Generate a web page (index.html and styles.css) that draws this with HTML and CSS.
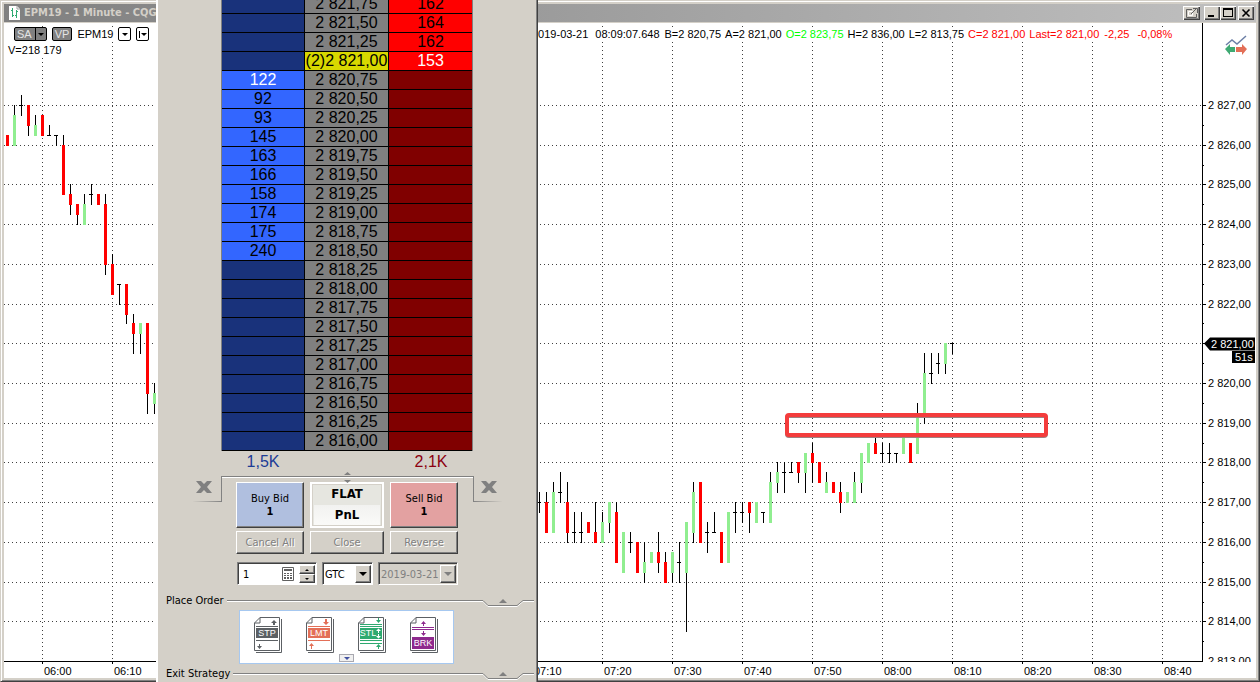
FILE: index.html
```html
<!DOCTYPE html>
<html lang="en">
<head>
    <meta charset="UTF-8">
    <meta name="viewport" content="width=device-width, initial-scale=1.0">
    <title>EPM19 - 1 Minute - CQG</title>
    <link rel="stylesheet" href="styles.css">
</head>
<body>
    <div class="window">
        <div class="titlebar">
            <svg class="title-icon" width="12" height="15" viewBox="0 0 12 15">
                <path d="M0 0h8l3 3v11H0z" fill="#fff"/>
                <path d="M8 0v3h3" fill="none" stroke="#a0a0a0"/>
                <path d="M3.500 2v9M2 4.500h2M3 9.500h2M7.500 4v8M6 9.500h2M7 5.500h2" fill="none" stroke="#2eaa70"/>
            </svg>
            <h1>EPM19 - 1 Minute - CQG</h1>
            <div class="window-buttons">
                <button class="win-btn popout" aria-label="Pop out">
                    <svg width="14" height="12" viewBox="0 0 14 12" fill="none" stroke="#606060">
                        <path d="M7 2.500H1.500v8h10V7"/>
                        <path d="M3.500 4.500h4v4h-4z" stroke="#fff"/>
                        <path d="M6 7l5-5M8 1.500h4.500V6"/>
                    </svg>
                </button>
                <button class="win-btn" aria-label="Minimize">
                    <svg width="12" height="10" viewBox="0 0 12 10"><path d="M2 7h6v2H2z"/></svg>
                </button>
                <button class="win-btn" aria-label="Maximize">
                    <svg width="12" height="10" viewBox="0 0 12 10"><path d="M1 0h10v9H1zM2 2v6h8V2z" fill-rule="evenodd"/></svg>
                </button>
                <button class="win-btn close" aria-label="Close window">
                    <svg width="12" height="10" viewBox="0 0 12 10"><path d="M2.500 1.500l7 7M9.500 1.500l-7 7" stroke="#000" stroke-width="1.600"/></svg>
                </button>
            </div>
        </div>

        <div class="chart" id="chart">
            <svg class="plot" id="plot"></svg>

            <div class="chart-header">
                <div class="chart-tools">
                    <button class="tag">SA<span class="tag-arrow"></span></button>
                    <button class="tag">VP</button>
                    <span class="symbol">EPM19</span>
                    <button class="mini" aria-label="Symbol menu"><i class="caret"></i></button>
                    <button class="mini" aria-label="Interval menu"><i class="bar"></i><i class="caret"></i></button>
                </div>
                <div class="quotes">
                    <span>2019-03-21</span>
                    <span class="time">08:09:07.648</span>
                    <span>B=2 820,75</span>
                    <span>A=2 821,00</span>
                    <span class="up">O=2 823,75</span>
                    <span>H=2 836,00</span>
                    <span>L=2 813,75</span>
                    <span class="down">C=2 821,00</span>
                    <span class="down">Last=2 821,00</span>
                    <span class="down change">-2,25</span>
                    <span class="down">-0,08%</span>
                </div>
            </div>
            <p class="volume">V=218 179</p>

            <button class="trade-btn" aria-label="Trade from chart">
                <svg width="22" height="20" viewBox="0 0 22 20">
                    <path d="M1 10l6-5 5 4 9-8" fill="none" stroke="#6c7fa6" stroke-width="1.500"/>
                    <path d="M0 14l5-5v3h5v5H5v3z" fill="#3faa73"/>
                    <path d="M22 14l-5-5v3h-6v5h6v3z" fill="#e36f57"/>
                </svg>
            </button>
        </div>
    </div>

    <div class="panel">
        <table class="ladder">
            <tbody id="ladder-rows">
                <!-- Price rows are added here -->
            </tbody>
        </table>
        <div class="totals">
            <span class="total-bid">1,5K</span>
            <span class="total-ask">2,1K</span>
        </div>

        <div class="entry">
            <div class="tab tab-left">
                <button class="cancel-x" aria-label="Cancel buys">
                    <svg width="16" height="12" viewBox="0 0 16 12"><path d="M0 0h5l3 3 3-3h5l-5 6 5 6h-5L8 9l-3 3H0l5-6z"/></svg>
                </button>
            </div>
            <div class="entry-body">
                <svg class="splitter" width="7" height="12" viewBox="0 0 7 12"><path d="M3.500 0L7 3H0zM3.500 11L7 8H0z"/></svg>
                <div class="order-buttons">
                    <button class="btn buy">Buy Bid<b>1</b></button>
                    <div class="position">
                        <b>FLAT</b>
                        <b class="pnl">PnL</b>
                    </div>
                    <button class="btn sell">Sell Bid<b>1</b></button>
                    <button class="btn" disabled>Cancel All</button>
                    <button class="btn" disabled>Close</button>
                    <button class="btn" disabled>Reverse</button>
                </div>
                <div class="order-fields">
                    <div class="field qty">
                        <input type="text" value="1" aria-label="Quantity">
                        <button class="calc" aria-label="Calculator">
                            <svg width="12" height="14" viewBox="0 0 12 14">
                                <path d="M.5.5h11v13H.5z" fill="#fff" stroke="#606060"/>
                                <path d="M2 2h8v2H2zM2 6h2v1H2zM5 6h2v1H5zM8 6h2v1H8zM2 8h2v1H2zM5 8h2v1H5zM8 8h2v1H8zM2 10h2v2H2zM5 10h2v2H5zM8 10h2v2H8z" fill="#606060"/>
                            </svg>
                        </button>
                        <div class="spin">
                            <button class="btn" aria-label="Increase"><svg width="4" height="2" viewBox="0 0 4 2"><path d="M2 0l2 2H0z"/></svg></button>
                            <button class="btn" aria-label="Decrease"><svg width="4" height="2" viewBox="0 0 4 2"><path d="M0 0h4L2 2z"/></svg></button>
                        </div>
                    </div>
                    <div class="field tif">
                        <select aria-label="Duration"><option>GTC</option></select>
                        <span class="drop"><i class="caret"></i></span>
                    </div>
                    <div class="field date">
                        <select aria-label="Expiry date" disabled><option>2019-03-21</option></select>
                        <span class="drop"><i class="caret"></i></span>
                    </div>
                </div>
            </div>
            <div class="tab tab-right">
                <button class="cancel-x" aria-label="Cancel sells">
                    <svg width="16" height="12" viewBox="0 0 16 12"><path d="M0 0h5l3 3 3-3h5l-5 6 5 6h-5L8 9l-3 3H0l5-6z"/></svg>
                </button>
            </div>
        </div>

        <div class="section">
            <h2>Place Order</h2>
            <span class="rule"></span>
            <svg class="notch" width="52" height="10" viewBox="0 0 52 10">
                <path d="M0 3.500h1l5 5h29l6-5h11" fill="none" stroke="#fff"/>
                <path d="M0 2.500h1l5 5h29l6-5h11" fill="none" stroke="#808080"/>
                <path d="M21 1l4 4h-8z" fill="#808080"/>
            </svg>
        </div>
        <div class="order-types">
            <button class="doc" aria-label="Stop order">
                <svg width="28" height="36" viewBox="0 0 28 36">
                    <path d="M27.500 2v33.500H2" fill="none" stroke="#5c6064"/>
                    <path d="M6 .5h19.500v33H.5V6zM6 .5V6H.5" fill="#fff" stroke="#5c6064"/>
                    <path d="M2 11h22v10H2zM2 9h22v1H2zM2 23h22v1H2zM20 3l3 3h-2v2h-2V6h-2zM5 27h1v2h2l-2.500 3L3 29h2z" fill="#5c6064"/>
                    <text x="13" y="19">STP</text>
                </svg>
            </button>
            <button class="doc" aria-label="Limit order">
                <svg width="28" height="36" viewBox="0 0 28 36">
                    <path d="M27.500 2v33.500H2" fill="none" stroke="#5c6064"/>
                    <path d="M6 .5h19.500v33H.5V6zM6 .5V6H.5" fill="#fff" stroke="#5c6064"/>
                    <path d="M2 11h22v10H2zM2 9h22v1H2zM2 23h22v1H2zM19 2h2v3h2l-3 3-3-3h2zM5 32v-3H3l2.500-3L8 29H6v3z" fill="#e36f57"/>
                    <text x="13" y="19">LMT</text>
                </svg>
            </button>
            <button class="doc" aria-label="Stop limit order">
                <svg width="28" height="36" viewBox="0 0 28 36">
                    <path d="M27.500 2v33.500H2" fill="none" stroke="#5c6064"/>
                    <path d="M6 .5h19.500v33H.5V6zM6 .5V6H.5" fill="#fff" stroke="#5c6064"/>
                    <path d="M2 11h22v11H2zM2 7h22v1H2zM2 9h22v1H2zM2 23h22v1H2zM2 26h22v1H2zM20 1h1v2h2l-2.500 3L18 3h2zM20 32v-2h-2l2.500-3 2.500 3h-2v2z" fill="#2eaa70"/>
                    <path d="M20 16v-2h-2l2.500-2.500L23 14h-2v2zM20 17h1v2h2l-2.500 2.500L18 19h2z" fill="#fff"/>
                    <text x="10" y="19">STL</text>
                </svg>
            </button>
            <button class="doc" aria-label="Bracket order">
                <svg width="28" height="36" viewBox="0 0 28 36">
                    <path d="M27.500 2v33.500H2" fill="none" stroke="#5c6064"/>
                    <path d="M6 .5h19.500v33H.5V6zM6 .5V6H.5" fill="#fff" stroke="#5c6064"/>
                    <path d="M2 20h22v12H2zM2 10h22v1H2zM2 12h22v1H2zM13 9V7h-2l2.500-3L16 7h-2v2zM13 14h1v2h2l-2.500 3-2.500-3h2z" fill="#8e2a8e"/>
                    <text x="13" y="29">BRK</text>
                </svg>
            </button>
            <button class="more" aria-label="More order types"><i class="caret"></i></button>
        </div>
        <div class="section">
            <h2>Exit Strategy</h2>
            <span class="rule"></span>
            <svg class="notch" width="52" height="10" viewBox="0 0 52 10">
                <path d="M0 3.500h1l5 5h29l6-5h11" fill="none" stroke="#fff"/>
                <path d="M0 2.500h1l5 5h29l6-5h11" fill="none" stroke="#808080"/>
                <path d="M21 1l4 4h-8z" fill="#808080"/>
            </svg>
        </div>
    </div>

    <script src="script.js"></script>
</body>
</html>
```

FILE: styles.css
```css
* {
    margin: 0;
    padding: 0;
    box-sizing: border-box;
}

body {
    height: 100vh;
    overflow: hidden;
    position: relative;
    background-color: #d4d0c8;
    font-family: "DejaVu Sans Condensed", "DejaVu Sans", sans-serif;
    font-size: 11px;
    color: #000;
}

button, input, select {
    font: inherit;
    color: inherit;
    border: none;
    background: none;
    border-radius: 0;
}

/* Chart window */

.window {
    height: 100%;
    display: flex;
    flex-direction: column;
    padding: 3px 2px 2px 3px;
    border: 1px solid #d4d0c8;
    border-right-color: #404040;
    border-bottom-color: #404040;
    box-shadow: inset 1px 1px #fff, inset -1px -1px #808080;
}

.titlebar {
    display: flex;
    align-items: center;
    height: 18px;
    margin-right: 1px;
    padding: 0 2px 0 5px;
    background: linear-gradient(to right, #808080, #c0c0c0);
}

.titlebar h1 {
    flex: 1;
    margin-left: 3px;
    font-size: 11px;
    line-height: 18px;
    color: #d4d0c8;
}

.window-buttons {
    display: flex;
}

.win-btn {
    width: 16px;
    height: 14px;
    display: flex;
    align-items: center;
    justify-content: center;
    background-color: #d4d0c8;
    box-shadow: inset 1px 1px #fff, inset -1px -1px #404040, inset -2px -2px #808080;
}

.win-btn.popout {
    margin-right: 4px;
    width: 17px;
}

.win-btn.close {
    margin-left: 2px;
}

.chart {
    flex: 1;
    min-height: 0;
    margin: 1px 1px 1px 0;
    position: relative;
    background-color: #fff;
    font-family: "Liberation Sans", Arial, sans-serif;
}

.plot {
    position: absolute;
    top: 0;
    left: 0;
    width: 100%;
    height: 100%;
    font-size: 11px;
}

.chart-header {
    position: relative;
    display: flex;
    align-items: center;
    padding-top: 4px;
    height: 18px;
}

.chart-tools {
    display: flex;
    align-items: center;
    gap: 5px;
    width: 528px;
    padding-left: 10px;
}

.tag {
    display: flex;
    height: 14px;
    line-height: 12px;
    padding: 0 2px;
    border: 1px solid #000;
    border-radius: 2px;
    background-color: #808080;
    color: #e4e4e4;
}

.tag-arrow {
    width: 11px;
    margin: 0 -2px 0 3px;
    border-left: 1px solid #000;
    position: relative;
}

.tag-arrow::after {
    content: "";
    position: absolute;
    top: 5px;
    left: 2px;
    border: 3px solid transparent;
    border-top-color: #000;
    border-bottom: none;
}

.symbol {
    background-color: #fff;
}

.mini {
    display: flex;
    align-items: center;
    justify-content: center;
    gap: 1px;
    width: 13px;
    height: 14px;
    border: 1px solid #000;
    border-radius: 2px;
    background-color: #fff;
}

.bar {
    width: 1px;
    height: 7px;
    background-color: #000;
}

.caret {
    border: 3px solid transparent;
    border-top-color: #000;
    border-bottom: none;
}

.quotes {
    display: flex;
    gap: 4px;
    background-color: #fff;
    white-space: nowrap;
    line-height: 14px;
}

.quotes .time {
    margin: 0 1px 0 3px;
}

.quotes .up {
    color: #00ff00;
}

.quotes .down {
    color: #ff0000;
}

.quotes .change {
    margin: 0 4px 0 1px;
}

.volume {
    position: relative;
    width: max-content;
    margin-left: 4px;
    padding-top: 2px;
    line-height: 14px;
    background-color: #fff;
}

.trade-btn {
    position: absolute;
    top: 12px;
    right: 9px;
    line-height: 0;
}

.grid {
    stroke: #404040;
    stroke-dasharray: 1 3;
}

.label-light {
    fill: #fff;
}

.bull {
    fill: #90ee90;
}

.bear {
    fill: #ff0000;
}

.marker {
    fill: none;
    stroke: #f43c3c;
    stroke-width: 4;
}

.marker-shadow {
    fill: none;
    stroke: #a08080;
    stroke-width: 4;
}

/* Order panel */

.panel {
    position: absolute;
    top: 0;
    bottom: 0;
    left: 156px;
    width: 382px;
    overflow: hidden;
    background-color: #d4d0c8;
    border-right: 1px solid #404040;
    box-shadow: inset 2px 0 #fff, inset -1px 0 #808080;
}

.ladder {
    width: 252px;
    margin: -5px 0 0 65px;
    border-collapse: separate;
    border-spacing: 0;
    border-left: 1px solid #808080;
    border-right: 1px solid #808080;
    table-layout: fixed;
    font-family: "Liberation Sans", Arial, sans-serif;
    font-size: 16px;
}

.ladder td {
    height: 19px;
    line-height: 18px;
    text-align: center;
    white-space: nowrap;
    border-bottom: 1px solid #000;
}

.ladder .bid {
    width: 82px;
    background-color: #19327b;
}

.ladder .bid.filled {
    background-color: #3366ff;
}

.ladder .price {
    width: 85px;
    background-color: #808080;
    border-left: 1px solid #000;
    border-right: 1px solid #000;
}

.ladder .ask {
    background-color: #800000;
}

.ladder .ask.filled {
    background-color: #ff0000;
}

.ladder .last {
    background-color: #d8d800;
}

.ladder .best {
    color: #fff;
}

.totals {
    display: flex;
    justify-content: space-between;
    width: 252px;
    height: 25px;
    margin-left: 65px;
    font-family: "Liberation Sans", Arial, sans-serif;
    font-size: 16px;
    line-height: 21px;
}

.totals span {
    width: 84px;
    text-align: center;
}

.total-bid {
    color: #1c3c96;
}

.total-ask {
    color: #8c0010;
}

.entry {
    display: flex;
    height: 118px;
}

.tab {
    height: 26px;
    display: flex;
    align-items: center;
    border-bottom: 1px solid;
}

.tab-left {
    width: 29px;
    margin-left: 37px;
    padding-left: 3px;
    border-right: 1px solid #808080;
    border-image: linear-gradient(to right, #d4d0c8, #808080) 1;
}

.tab-right {
    width: 29px;
    padding-left: 7px;
    border-left: 1px solid #808080;
    border-image: linear-gradient(to left, #d4d0c8, #808080) 1;
}

.cancel-x {
    line-height: 0;
    padding-bottom: 4px;
    fill: #808080;
}

.entry-body {
    position: relative;
    width: 251px;
    padding: 5px 14px 0;
    border-top: 1px solid #808080;
    box-shadow: inset 0 1px #fff;
}

.splitter {
    position: absolute;
    top: -5px;
    left: 122px;
    fill: #808080;
}

.order-buttons {
    display: grid;
    grid-template-columns: 68px 74px 68px;
    grid-template-rows: 46px 23px;
    gap: 3px 6px;
}

.btn {
    background-color: #d4d0c8;
    border: 1px solid #fff;
    border-right-color: #404040;
    border-bottom-color: #404040;
    box-shadow: inset -1px -1px #808080;
}

.btn:disabled {
    color: #808080;
    text-shadow: 1px 1px #fff;
}

.btn b {
    display: block;
}

.buy {
    background-color: #b0bfdf;
}

.sell {
    background-color: #e3a1a1;
}

.position {
    border: 2px solid #fff;
    background-color: #e6e6e0;
    box-shadow: inset 1px 1px #d4d0c8, inset -1px -1px #d4d0c8;
    font-size: 13px;
    text-align: center;
}

.position b {
    display: block;
    height: 20px;
    line-height: 19px;
}

.position .pnl {
    margin: 1px 2px 0;
    background: linear-gradient(to bottom, #f2f2f0, #fafaf8);
}

.order-fields {
    display: flex;
    gap: 5px;
    padding: 8px 0 0 1px;
}

.field {
    position: relative;
    display: flex;
    height: 23px;
    border: 1px solid #808080;
    border-right-color: #fff;
    border-bottom-color: #fff;
    box-shadow: inset 1px 1px #404040;
    padding: 2px 1px 1px 2px;
    background-color: #fff;
}

.qty {
    width: 80px;
}

.qty input {
    flex: 1;
    min-width: 0;
    padding-left: 3px;
    outline: none;
}

.calc {
    padding: 0 5px;
    line-height: 0;
}

.spin {
    width: 16px;
    display: flex;
    flex-direction: column;
}

.spin .btn {
    flex: 1;
    line-height: 0;
    display: flex;
    align-items: center;
    justify-content: center;
}

.field select {
    appearance: none;
    width: 100%;
    outline: none;
}

.tif {
    width: 51px;
}

.date {
    width: 80px;
    background-color: #d4d0c8;
}

.date select:disabled {
    color: #808080;
    opacity: 1;
}

.date .caret {
    border-top-color: #808080;
}

.drop {
    position: absolute;
    top: 2px;
    right: 1px;
    bottom: 1px;
    width: 16px;
    display: flex;
    align-items: center;
    justify-content: center;
    pointer-events: none;
    background-color: #d4d0c8;
    border: 1px solid #fff;
    border-right-color: #404040;
    border-bottom-color: #404040;
    box-shadow: inset -1px -1px #808080;
}

.drop .caret {
    border-width: 4px 4px 0;
}

.section {
    display: flex;
    align-items: center;
    height: 14px;
    padding: 0 3px 0 10px;
}

.section h2 {
    margin-right: 3px;
    font-size: 11px;
    font-weight: normal;
    line-height: 14px;
}

.rule {
    flex: 1;
    height: 2px;
    border-top: 1px solid #808080;
    border-bottom: 1px solid #fff;
}

.notch {
    height: 10px;
    margin-top: 4px;
}

.order-types {
    position: relative;
    display: flex;
    gap: 24px;
    width: 215px;
    height: 54px;
    margin: 2px 0 3px 83px;
    padding: 6px 14px;
    background-color: #fff;
    border: 1px solid #a6c8f0;
}

.doc {
    line-height: 0;
    height: 36px;
}

.doc text {
    font-family: "Liberation Sans", Arial, sans-serif;
    font-size: 9px;
    text-anchor: middle;
    fill: #fff;
}

.more {
    position: absolute;
    left: 99px;
    bottom: 1px;
    width: 15px;
    height: 8px;
    display: flex;
    align-items: center;
    justify-content: center;
    border: 1px solid #a8a8b0;
    background-color: #f0f0f0;
}

.more .caret {
    border-top-color: #4050a0;
}
```

FILE: script.js
```js
const SVG_NS = "http://www.w3.org/2000/svg";
const chart = document.getElementById("chart");
const plot = document.getElementById("plot");

const TOP_PRICE = 2827;
const TOP_Y = 82;
const TICK = 9.93; // height of a 0,25 move
const MINUTE = 7;
const FIRST_X = 38; // 06:00

// [open, high, low, close] in ticks below TOP_PRICE
const series = [
    {
        start: -5,
        bars: [
            [3, 3, 4, 4], [4, 0, 4, 1], [0, -1, 1, 0], [0, 0, 3, 2], [3, 1, 3, 2],
            [1, 1, 3, 3], [3, 2, 3, 3], [3, 3, 4, 3], [4, 3, 9, 9], [9, 8, 11, 10],
            [10, 10, 12, 11], [12, 9, 12, 10], [9, 8, 10, 9], [9, 9, 10, 10], [10, 9, 17, 16],
            [16, 15, 19, 19], [18, 18, 20, 18], [18, 18, 22, 21], [22, 21, 25, 23], [23, 22, 25, 22],
            [22, 22, 31, 29], [30, 28, 31, 29]
        ]
    },
    {
        start: 71,
        bars: [
            [40, 39, 41, 40], [40, 39, 43, 43], [43, 38, 43, 39], [39, 37, 40, 39], [40, 38, 44, 43],
            [43, 41, 44, 43], [43, 41, 44, 43], [42, 42, 43, 43], [43, 40, 44, 44], [44, 41, 44, 42],
            [42, 40, 43, 40], [41, 40, 46, 46], [47, 43, 47, 43], [44, 43, 45, 44], [44, 44, 47, 47],
            [47, 44, 48, 46], [46, 45, 46, 45], [45, 43, 47, 46], [46, 45, 48, 48], [47, 45, 48, 45],
            [46, 44, 48, 46], [47, 42, 53, 42], [43, 38, 44, 39], [38, 38, 44, 44], [43, 42, 45, 43],
            [43, 41, 43, 43], [43, 43, 46, 46], [46, 41, 46, 41], [41, 40, 43, 41], [41, 40, 42, 41],
            [40, 40, 43, 41], [42, 40, 42, 40], [41, 41, 42, 41], [42, 37, 42, 38], [38, 36, 39, 37],
            [37, 36, 39, 37], [37, 36, 37, 37], [36, 36, 38, 37], [37, 35, 39, 35], [35, 34, 38, 36],
            [36, 36, 38, 38], [39, 37, 39, 38], [38, 38, 39, 39], [39, 38, 41, 40], [40, 39, 40, 39],
            [40, 37, 40, 38], [38, 35, 39, 35], [36, 34, 36, 34], [34, 33, 35, 35], [35, 34, 36, 35],
            [35, 34, 36, 35], [35, 35, 36, 35], [35, 33, 35, 33], [34, 34, 36, 36], [35, 30, 35, 31],
            [31, 25, 32, 27], [27, 25, 28, 27], [26, 25, 27, 26], [26, 24, 27, 24], [24, 24, 25, 24]
        ]
    }
];

const tickY = ticks => Math.round(TOP_Y + ticks * TICK);

function formatPrice(price) {
    const text = price.toFixed(2).replace(".", ",");
    return text[0] + " " + text.slice(1);
}

function add(name, attrs, text) {
    const el = document.createElementNS(SVG_NS, name);
    for (const key in attrs) {
        el.setAttribute(key, attrs[key]);
    }
    if (text) {
        el.textContent = text;
    }
    plot.appendChild(el);
    return el;
}

function rect(x, y, width, height, cls) {
    add("rect", { x, y, width, height, class: cls || "" });
}

function drawBar(x, [open, high, low, close]) {
    rect(x, tickY(high), 1, tickY(low) - tickY(high) + 1);
    if (open === close) {
        rect(x - 2, tickY(open), 4, 1);
        return;
    }
    const top = tickY(Math.min(open, close));
    const bottom = tickY(Math.max(open, close));
    rect(x - 1, top, 3, bottom - top + 1, close < open ? "bull" : "bear");
}

function drawChart() {
    const w = chart.clientWidth;
    const h = chart.clientHeight;
    const axisX = w - 54;
    const axisY = h - 17;
    plot.innerHTML = "";

    // Price grid and labels
    for (let i = 0; tickY(i * 4) <= axisY; i++) {
        const y = tickY(i * 4);
        if (y < axisY - 5) {
            add("line", { x1: 0, x2: axisX, y1: y + 0.5, y2: y + 0.5, class: "grid" });
            rect(axisX + 1, y, 3, 1);
            rect(axisX + 1, tickY(i * 4 + 2), 1, 1);
        }
        if (i !== 6) {
            add("text", { x: axisX + 6, y: y + 4 }, formatPrice(TOP_PRICE - i));
        }
    }
    rect(0, axisY + 1, w, h - axisY, "label-light");

    // Time grid and labels
    for (let m = 0; FIRST_X + m * MINUTE < axisX; m += 10) {
        // the order panel covers this part
        if (m > 10 && m < 70) continue;
        const x = FIRST_X + m * MINUTE;
        const hour = String(6 + Math.floor(m / 60)).padStart(2, "0");
        const min = String(m % 60).padStart(2, "0");
        add("line", { x1: x + 0.5, x2: x + 0.5, y1: 3, y2: axisY, class: "grid" });
        rect(x, axisY, 1, 3);
        add("text", { x: x + 2, y: h - 3 }, hour + ":" + min);
    }

    series.forEach(part => {
        part.bars.forEach((bar, i) => drawBar(FIRST_X + (part.start + i) * MINUTE, bar));
    });

    rect(0, axisY, axisX, 1);
    rect(axisX, 0, 1, axisY + 1);

    // Last price and bar countdown
    const last = tickY(24);
    add("path", { d: `M${axisX + 2} ${last + 0.5}l6-6h45v13h-45z` });
    add("text", { x: axisX + 9, y: last + 5, class: "label-light" }, "2 821,00");
    rect(axisX + 30, last + 8, 23, 12);
    add("text", { x: axisX + 33, y: last + 18, class: "label-light" }, "51s");

    // Highlighted zone
    add("rect", { x: 783, y: 393, width: 259, height: 20, rx: 2, class: "marker-shadow" });
    add("rect", { x: 783, y: 392, width: 259, height: 20, rx: 2, class: "marker" });
}

const bids = [122, 92, 93, 145, 163, 166, 158, 174, 175, 240];
const asks = [153, 162, 164, 162];
const ladderRows = document.getElementById("ladder-rows");

function drawLadder() {
    for (let price = 2821.75; price >= 2816; price -= 0.25) {
        const ask = asks[(price - 2821) * 4] || "";
        const bid = bids[(2820.75 - price) * 4] || "";
        const isLast = price === 2821;
        const row = document.createElement("tr");
        row.innerHTML = `
            <td class="bid ${bid ? "filled" : ""} ${price === 2820.75 ? "best" : ""}">${bid}</td>
            <td class="price ${isLast ? "last" : ""}">${isLast ? "(2)" : ""}${formatPrice(price)}</td>
            <td class="ask ${ask ? "filled" : ""} ${isLast ? "best" : ""}">${ask}</td>
        `;
        ladderRows.appendChild(row);
    }
}

drawLadder();
drawChart();
window.addEventListener("resize", drawChart);
```
